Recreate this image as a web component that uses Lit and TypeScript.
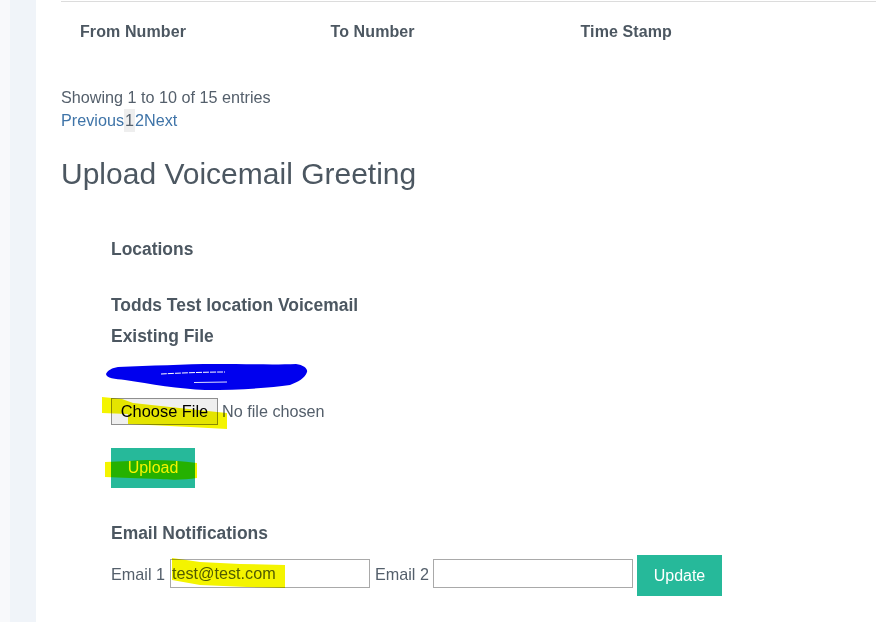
import { LitElement, html, css, svg } from "lit";
import { customElement } from "lit/decorators.js";

@customElement("app-root")
export class AppRoot extends LitElement {
  static styles = css`
    :host { display: block; width: 876px; height: 622px; overflow: hidden; position: relative; background: #fff;
      font-family: "Liberation Sans", Arial, sans-serif; font-size: 16.2px; color: #545f6b; }
    * { box-sizing: border-box; }
    .page { display: flex; height: 622px; }
    .rail-a { width: 10px; background: #f8f9fb; }
    .rail-b { width: 26px; background: #f0f4f9; }
    .main { flex: 1; padding-left: 25px; min-width: 0; }
    .thead { display: grid; grid-template-columns: 250.5px 250px 1fr; border-top: 1px solid #dcdcdc; margin-top: 1px;
      padding: 21px 0 0 19px; height: 60px; font-size: 16px; letter-spacing: 0.1px; font-weight: 700; line-height: 18px; color: #4c5761; }
    .showing { margin-top: 25px; line-height: 23px; }
    .pager { display: flex; line-height: 23px; color: #3f74a8; }
    .current { background: #eeeeee; color: #545f6b; padding: 0 1px; }
    h2 { margin: 22px 0 0; font-size: 30px; font-weight: 400; line-height: 40px; color: #4c5761; }
    .form { padding-left: 50px; display: flex; flex-direction: column; align-items: flex-start; }
    h4 { margin: 0; font-size: 17.45px; font-weight: 700; line-height: 22px; color: #4c5761; }
    .locations { margin-top: 44px; }
    .todds { margin-top: 34px; }
    .existing { margin-top: 9px; }
    .file { margin-top: 51px; font: 16.2px "Liberation Sans", Arial, sans-serif; color: #545f6b; height: 27px; width: 260px; }
    .file::file-selector-button { width: 107px; height: 27px; margin: 0 4px 0 0; padding: 0; border: 1px solid #8f8f8f; border-radius: 0;
      background: #efefef; color: #000; font: 16.4px "Liberation Sans", Arial, sans-serif; }
    .upload { margin-top: 23px; width: 84px; height: 40px; }
    .btn { background: #26b99a; color: #fff; border: 0; padding: 0; font: 16px "Liberation Sans", Arial, sans-serif; }
    .notif { margin-top: 34px; }
    .row { display: flex; align-items: center; gap: 5px; margin-top: 11px; height: 41px; }
    .row span { margin-bottom: 2px; }
    .row input { width: 200px; height: 29px; margin: 0 0 4px; border: 1px solid #a9a9a9; padding: 1px;
      font: 16.2px "Liberation Sans", Arial, sans-serif; color: #545f6b; background: #fff; }
    .row input.second { margin-left: -1px; }
    .update { width: 85px; height: 41px; margin-left: -1px; }
    .scribbles { position: absolute; inset: 0; pointer-events: none; }
    .y { mix-blend-mode: multiply; fill: #f4f400; }
  `;

  render() {
    return html`
      <div class="page">
        <div class="rail-a"></div>
        <div class="rail-b"></div>
        <div class="main">
          <div class="thead"><span>From Number</span><span>To Number</span><span>Time Stamp</span></div>
          <div class="showing">Showing 1 to 10 of 15 entries</div>
          <div class="pager"><span>Previous</span><span class="current">1</span><span>2</span><span>Next</span></div>
          <h2>Upload Voicemail Greeting</h2>
          <div class="form">
            <h4 class="locations">Locations</h4>
            <h4 class="todds">Todds Test location Voicemail</h4>
            <h4 class="existing">Existing File</h4>
            <input class="file" type="file" />
            <button class="btn upload">Upload</button>
            <h4 class="notif">Email Notifications</h4>
            <div class="row">
              <span>Email 1</span><input type="text" value="test@test.com" />
              <span>Email 2</span><input class="second" type="text" />
              <button class="btn update">Update</button>
            </div>
          </div>
        </div>
      </div>
      <svg class="scribbles" width="876" height="622" viewBox="0 0 876 622">
        ${svg`
          <path fill="#0000ee" d="M106 374C108 370 112 368 118 367C150 366 185 364 215 364C245 364 275 365 296 364C304 365 308 369 307 372C305 378 298 382 290 385C270 388 240 390 205 390C180 389 150 384 125 380C115 379 106 378 106 374Z"/>
          <path fill="none" stroke="#fff" stroke-width="1" stroke-dasharray="6 1" d="M161 374C180 373 205 372 225 372"/>
          <path fill="none" stroke="#dfe0ff" stroke-width="1" d="M194 382.5L227 382"/>
          <path class="y" d="M102 397L122 399L133 403L170 407L217 412L227 413L227 429L190 427L128 424L128 414L102 413Z"/>
          <path class="y" d="M105 462L130 461C150 459 175 460 197 463L197 478C185 480 170 480 160 479L130 478L105 477Z"/>
          <path class="y" d="M172 558L200 562L240 564L285 565L285 588L247 587L200 585L172 580Z"/>
        `}
      </svg>
    `;
  }
}
